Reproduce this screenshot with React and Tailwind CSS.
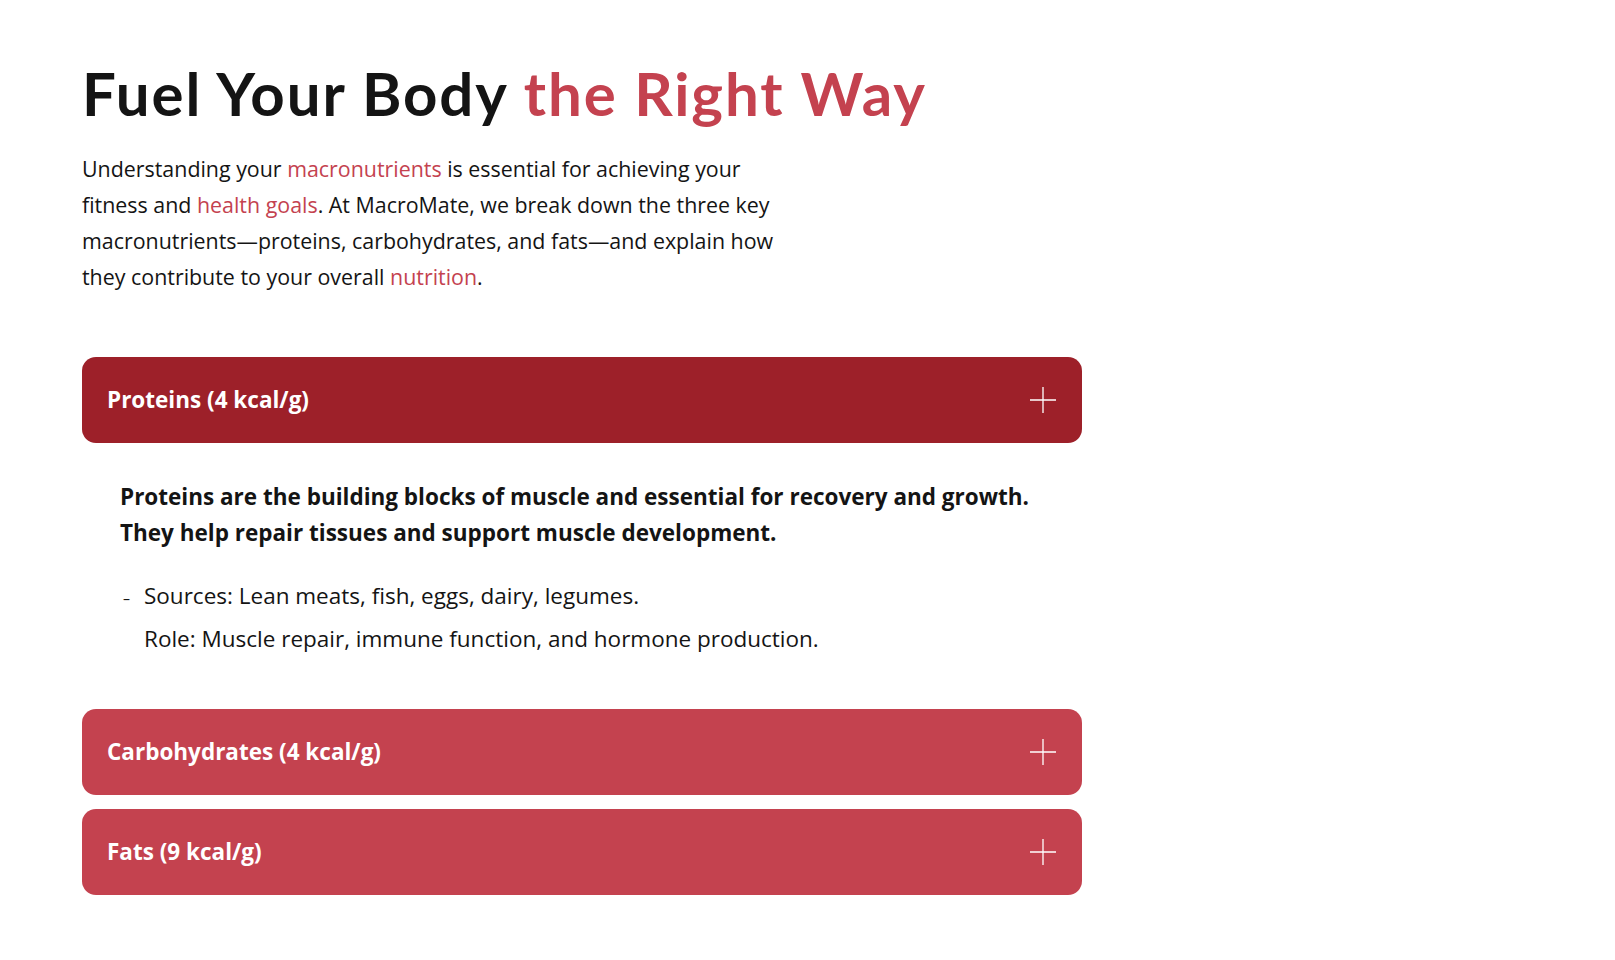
import React, { useState } from 'react';

const items = [
  {
    title: 'Proteins (4 kcal/g)',
    lead: 'Proteins are the building blocks of muscle and essential for recovery and growth. They help repair tissues and support muscle development.',
    points: ['Sources: Lean meats, fish, eggs, dairy, legumes.', 'Role: Muscle repair, immune function, and hormone production.'],
  },
  {
    title: 'Carbohydrates (4 kcal/g)',
    lead: 'Carbohydrates are your body’s main source of energy, fueling workouts and daily activity.',
    points: ['Sources: Whole grains, fruits, vegetables, legumes.', 'Role: Energy supply, brain function, and performance.'],
  },
  {
    title: 'Fats (9 kcal/g)',
    lead: 'Fats support hormone balance and help your body absorb essential vitamins.',
    points: ['Sources: Avocados, nuts, seeds, olive oil, fatty fish.', 'Role: Hormone production, cell health, and vitamin absorption.'],
  },
];

const PlusIcon = () => (
  <svg width="26" height="26" viewBox="0 0 26 26" fill="none" stroke="white" strokeWidth="1.3">
    <path d="M13 0v26M0 13h26" />
  </svg>
);

export default function App() {
  const [open, setOpen] = useState(0);

  return (
    <div className="min-h-screen bg-white pl-[82px] pt-[60px]" style={{ fontFamily: '"Open Sans", sans-serif' }}>
      <h1 className="text-[60px] font-bold leading-[1.1] tracking-[1.9px] text-[#141414]" style={{ fontFamily: 'Lato, sans-serif' }}>
        Fuel Your Body <span className="text-[#c4424f]">the Right Way</span>
      </h1>

      <p className="mt-[25px] max-w-[716px] text-[21.4px] leading-[36px] text-[#141414]">
        Understanding your <span className="text-[#c4424f]">macronutrients</span> is essential for achieving your
        fitness and <span className="text-[#c4424f]">health goals</span>. At MacroMate, we break down the three key
        macronutrients—proteins, carbohydrates, and fats—and explain how they contribute to your overall{' '}
        <span className="text-[#c4424f]">nutrition</span>.
      </p>

      <div className="mt-[62px] flex w-[1000px] flex-col gap-[14px]">
        {items.map((item, i) => (
          <div key={item.title}>
            <button
              onClick={() => setOpen(open === i ? -1 : i)}
              className={`flex h-[86px] w-full items-center justify-between rounded-[14px] pl-[25px] pr-[26px] text-left ${
                open === i ? 'bg-[#9d2029]' : 'bg-[#c4424f]'
              }`}
            >
              <span className="text-[22.5px] font-bold text-white">{item.title}</span>
              <PlusIcon />
            </button>
            {open === i && (
              <div className="px-[38px] pt-[36px] pb-[36px] text-[#141414]">
                <p className="text-[22.5px] font-bold leading-[36px]">{item.lead}</p>
                <ul className="mt-[25px] text-[22.5px] leading-[40px]">
                  {item.points.map((p, j) => (
                    <li key={p} className="flex items-baseline">
                      <span className="w-[24px] pl-[3px] text-[14px]">{j === 0 ? '–' : ''}</span>
                      <span>{p}</span>
                    </li>
                  ))}
                </ul>
              </div>
            )}
          </div>
        ))}
      </div>
    </div>
  );
}
